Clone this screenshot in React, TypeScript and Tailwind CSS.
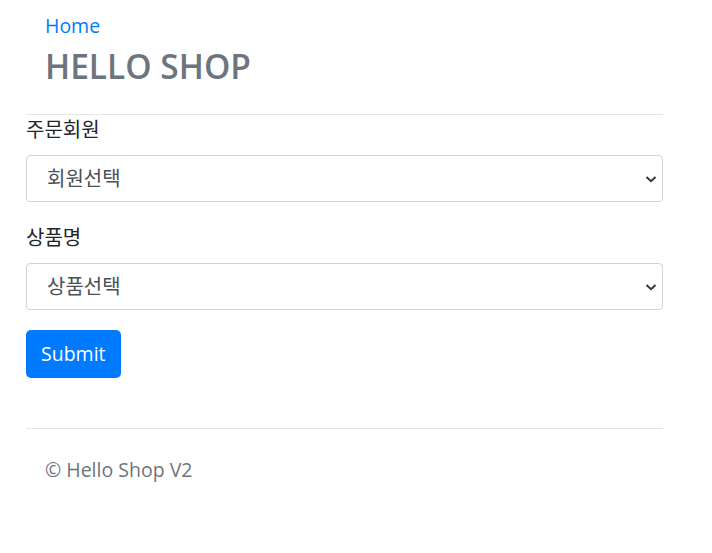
import React from 'react';

const font = { fontFamily: '"Open Sans", "Noto Sans CJK KR", sans-serif' };

function Chevron() {
  return (
    <svg className="pointer-events-none absolute right-[6px] top-1/2 h-[12px] w-[12px] -translate-y-1/2" viewBox="0 0 12 12" fill="none">
      <path d="M1.5 4 L6 8.2 L10.5 4" stroke="#343a40" strokeWidth="2" />
    </svg>
  );
}

function SelectField({ label, placeholder, className }: { label: string; placeholder: string; className: string }) {
  return (
    <div className={className}>
      <label className="mb-[10px] block text-[20px] leading-[30px] text-[#212529]">{label}</label>
      <div className="relative">
        <select
          className="h-[47px] w-full appearance-none rounded-[4px] border border-[#ced4da] bg-white px-[20px] text-[20px] text-[#495057] outline-none"
          style={font}
          defaultValue=""
        >
          <option value="">{placeholder}</option>
        </select>
        <Chevron />
      </div>
    </div>
  );
}

export default function App() {
  return (
    <div className="min-h-[553px] w-[712px] bg-white" style={font}>
      <div className="ml-[26px] w-[637px]">
        <div className="border-b border-[#e5e5e5] px-[19px] pt-[11px] pb-[27px]">
          <a className="block text-[19.5px] leading-[30px] text-[#007bff]">Home</a>
          <h3 className="mt-[4px] text-[33.5px] leading-[42px] font-semibold text-[#6c757d]">HELLO SHOP</h3>
        </div>
        <form>
          <SelectField className="mb-[21px]" label="주문회원" placeholder="회원선택" />
          <SelectField className="mb-[20px]" label="상품명" placeholder="상품선택" />
          <button
            type="button"
            className="h-[48px] rounded-[5px] bg-[#007bff] px-[15px] text-[19.5px] text-white"
          >
            Submit
          </button>
        </form>
        <div className="mt-[50px] border-t border-[#e5e5e5] px-[19px] pt-[26px]">
          <p className="text-[19.5px] leading-[30px] text-[#6c757d]">© Hello Shop V2</p>
        </div>
      </div>
    </div>
  );
}
